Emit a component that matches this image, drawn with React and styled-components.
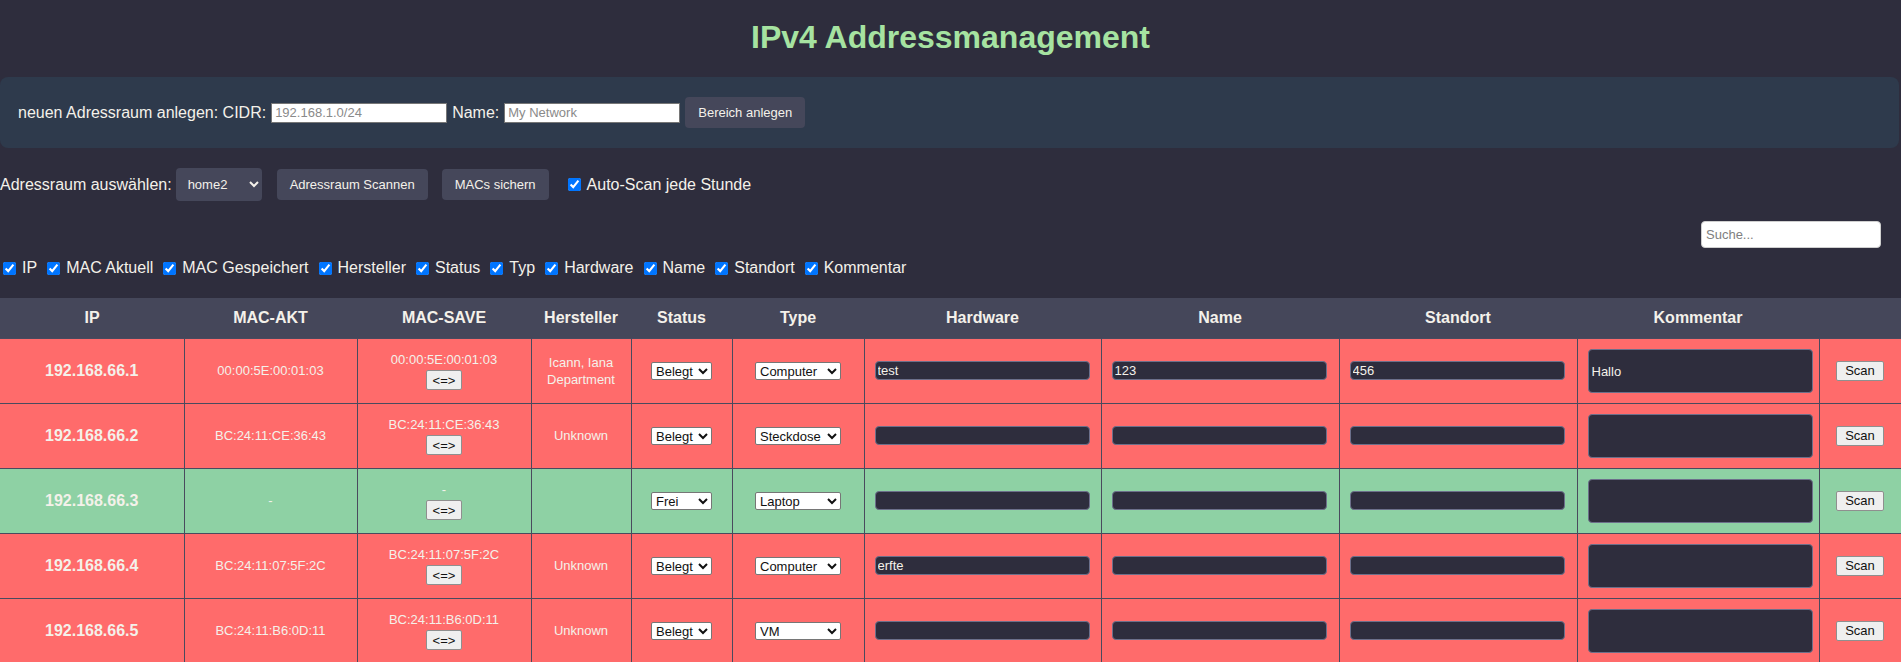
import React from "react";
import styled, { createGlobalStyle } from "styled-components";

const GlobalStyle = createGlobalStyle`
  body {
    margin: 0;
    background-color: #2e2d3d;
    font-family: "Liberation Sans", Arial, sans-serif;
    color: #f4f1ea;
  }
`;

const columns = [
  { label: "IP", w: 184 },
  { label: "MAC-AKT", w: 173 },
  { label: "MAC-SAVE", w: 174 },
  { label: "Hersteller", w: 100 },
  { label: "Status", w: 101 },
  { label: "Type", w: 132 },
  { label: "Hardware", w: 237 },
  { label: "Name", w: 238 },
  { label: "Standort", w: 238 },
  { label: "Kommentar", w: 242 },
  { label: "", w: 82 },
];

const filters = [
  "IP",
  "MAC Aktuell",
  "MAC Gespeichert",
  "Hersteller",
  "Status",
  "Typ",
  "Hardware",
  "Name",
  "Standort",
  "Kommentar",
];

const rows = [
  {
    ip: "192.168.66.1",
    macAkt: "00:00:5E:00:01:03",
    macSave: "00:00:5E:00:01:03",
    vendor: "Icann, Iana Department",
    status: "Belegt",
    type: "Computer",
    hardware: "test",
    name: "123",
    location: "456",
    comment: "Hallo",
  },
  {
    ip: "192.168.66.2",
    macAkt: "BC:24:11:CE:36:43",
    macSave: "BC:24:11:CE:36:43",
    vendor: "Unknown",
    status: "Belegt",
    type: "Steckdose",
  },
  {
    ip: "192.168.66.3",
    macAkt: "-",
    macSave: "-",
    vendor: "",
    status: "Frei",
    type: "Laptop",
  },
  {
    ip: "192.168.66.4",
    macAkt: "BC:24:11:07:5F:2C",
    macSave: "BC:24:11:07:5F:2C",
    vendor: "Unknown",
    status: "Belegt",
    type: "Computer",
    hardware: "erfte",
  },
  {
    ip: "192.168.66.5",
    macAkt: "BC:24:11:B6:0D:11",
    macSave: "BC:24:11:B6:0D:11",
    vendor: "Unknown",
    status: "Belegt",
    type: "VM",
  },
];

const typeOptions = ["Computer", "Steckdose", "Laptop", "VM", "Server"];

function App() {
  return (
    <Page>
      <GlobalStyle />
      <Title>IPv4 Addressmanagement</Title>

      <CreatePanel>
        <span>neuen Adressraum anlegen: CIDR:</span>
        <LightInput placeholder="192.168.1.0/24" />
        <span>Name:</span>
        <LightInput placeholder="My Network" />
        <DarkButton>Bereich anlegen</DarkButton>
      </CreatePanel>

      <ControlRow>
        <ControlLabel>Adressraum auswählen:</ControlLabel>
        <DarkSelect defaultValue="home2">
          <option>home1</option>
          <option>home2</option>
        </DarkSelect>
        <DarkButton $gap={14}>Adressraum Scannen</DarkButton>
        <DarkButton $gap={16}>MACs sichern</DarkButton>
        <CheckLabel>
          <Check type="checkbox" defaultChecked />
          Auto-Scan jede Stunde
        </CheckLabel>
      </ControlRow>

      <SearchRow>
        <SearchInput placeholder="Suche..." />
      </SearchRow>

      <FilterRow>
        {filters.map((f) => (
          <CheckLabel key={f}>
            <Check type="checkbox" defaultChecked />
            {f}
          </CheckLabel>
        ))}
      </FilterRow>

      <Table>
        <thead>
          <tr>
            {columns.map((c, i) => (
              <Th key={i} style={{ width: c.w }}>
                {c.label}
              </Th>
            ))}
          </tr>
        </thead>
        <tbody>
          {rows.map((r) => (
            <Row key={r.ip} $free={r.status === "Frei"}>
              <IpCell>{r.ip}</IpCell>
              <Td>{r.macAkt}</Td>
              <Td>
                <div>{r.macSave}</div>
                <SmallButton $top={2}>{"<=>"}</SmallButton>
              </Td>
              <Td>{r.vendor}</Td>
              <Td>
                <CellSelect $w={61} defaultValue={r.status}>
                  <option>Belegt</option>
                  <option>Frei</option>
                </CellSelect>
              </Td>
              <Td>
                <CellSelect $w={86} defaultValue={r.type}>
                  {typeOptions.map((t) => (
                    <option key={t}>{t}</option>
                  ))}
                </CellSelect>
              </Td>
              <FieldCell>
                <DarkInput defaultValue={r.hardware || ""} />
              </FieldCell>
              <FieldCell>
                <DarkInput defaultValue={r.name || ""} />
              </FieldCell>
              <FieldCell>
                <DarkInput defaultValue={r.location || ""} />
              </FieldCell>
              <FieldCell>
                <Comment defaultValue={r.comment || ""} />
              </FieldCell>
              <Td>
                <SmallButton $pad={8}>Scan</SmallButton>
              </Td>
            </Row>
          ))}
        </tbody>
      </Table>
    </Page>
  );
}
export default App;

const Page = styled.div`
  padding-top: 19px;
`;

const Title = styled.h1`
  margin: 0 0 21px 0;
  text-align: center;
  font-size: 32px;
  line-height: 37px;
  font-weight: bold;
  color: #a6e3a1;
`;

const CreatePanel = styled.div`
  display: flex;
  align-items: center;
  gap: 5px;
  margin-right: 2px;
  padding: 20px 18px;
  background-color: #2e3a4c;
  border-radius: 8px;
  font-size: 16px;
`;

const LightInput = styled.input`
  box-sizing: border-box;
  width: 176px;
  height: 20px;
  padding: 1px 3px;
  border: 1px solid #767676;
  font-family: "Liberation Sans", Arial, sans-serif;
  font-size: 13px;
  background: #fff;
  &::placeholder {
    color: #8a8a8a;
  }
`;

const DarkButton = styled.button`
  height: 31px;
  padding: 0 13px;
  margin-right: ${(p) => (p.$gap ? p.$gap : 0)}px;
  border: none;
  border-radius: 4px;
  background-color: #45475a;
  color: #f4f1ea;
  font-family: "Liberation Sans", Arial, sans-serif;
  font-size: 13px;
`;

const ControlRow = styled.div`
  display: flex;
  align-items: center;
  margin-top: 20px;
  height: 33px;
  font-size: 16px;
`;

const ControlLabel = styled.span`
  margin-right: 4px;
`;

const DarkSelect = styled.select`
  width: 86px;
  height: 33px;
  margin-right: 15px;
  padding: 0 8px;
  border: none;
  border-radius: 4px;
  background-color: #45475a;
  color: #f4f1ea;
  font-family: "Liberation Sans", Arial, sans-serif;
  font-size: 13px;
`;

const CheckLabel = styled.label`
  display: inline-flex;
  align-items: center;
  margin-right: 7px;
  font-size: 16px;
`;

const Check = styled.input`
  width: 13px;
  height: 13px;
  margin: 0 6px 0 3px;
`;

const SearchRow = styled.div`
  display: flex;
  justify-content: flex-end;
  margin-top: 20px;
  padding-right: 20px;
`;

const SearchInput = styled.input`
  box-sizing: border-box;
  width: 180px;
  height: 27px;
  padding: 0 4px;
  border: 1px solid #cfcfcf;
  border-radius: 4px;
  background: #fff;
  font-family: "Liberation Sans", Arial, sans-serif;
  font-size: 13px;
  &::placeholder {
    color: #808080;
  }
`;

const FilterRow = styled.div`
  display: flex;
  align-items: center;
  height: 18px;
  margin-top: 11px;
  margin-bottom: 21px;
`;

const Table = styled.table`
  width: 1901px;
  table-layout: fixed;
  border-collapse: collapse;
`;

const Th = styled.th`
  box-sizing: border-box;
  height: 40px;
  padding: 0 10px;
  background-color: #45475a;
  color: #f4f1ea;
  font-size: 16px;
  font-weight: bold;
  text-align: center;
`;

const Row = styled.tr`
  background-color: ${(p) => (p.$free ? "#8ed1a4" : "#ff6b6b")};
`;

const Td = styled.td`
  padding: 10px;
  border: 1px solid #4a4a5e;
  text-align: center;
  vertical-align: middle;
  font-size: 13px;
  line-height: 17px;
  color: #f4f1ea;
  &:first-child {
    border-left: none;
  }
`;

const IpCell = styled(Td)`
  font-size: 16px;
  font-weight: bold;
`;

const FieldCell = styled(Td)`
  text-align: left;
`;

const SmallButton = styled.button`
  height: 20px;
  margin-top: ${(p) => (p.$top ? p.$top : 0)}px;
  padding: 0 ${(p) => (p.$pad ? p.$pad : 6)}px;
  border: 1px solid #8f8f8f;
  border-radius: 2px;
  background-color: #efefef;
  color: #111;
  font-family: "Liberation Sans", Arial, sans-serif;
  font-size: 13px;
  vertical-align: middle;
`;

const CellSelect = styled.select`
  width: ${(p) => p.$w}px;
  height: 18px;
  padding: 0;
  border: 1px solid #767676;
  border-radius: 2px;
  background: #fff;
  color: #111;
  font-family: "Liberation Sans", Arial, sans-serif;
  font-size: 13px;
`;

const DarkInput = styled.input`
  box-sizing: border-box;
  display: block;
  width: 215px;
  height: 19px;
  padding: 0 2px;
  border: 1px solid #6c6f8a;
  border-radius: 4px;
  background-color: #2e2d3d;
  color: #f4f1ea;
  font-family: "Liberation Sans", Arial, sans-serif;
  font-size: 13px;
`;

const Comment = styled.textarea`
  box-sizing: border-box;
  display: block;
  width: 225px;
  height: 44px;
  padding: 13px 3px 0 3px;
  border: 1px solid #6c6f8a;
  border-radius: 4px;
  background-color: #2e2d3d;
  color: #f4f1ea;
  font-family: "Liberation Sans", Arial, sans-serif;
  font-size: 13px;
  line-height: 17px;
  resize: none;
  overflow: hidden;
`;
